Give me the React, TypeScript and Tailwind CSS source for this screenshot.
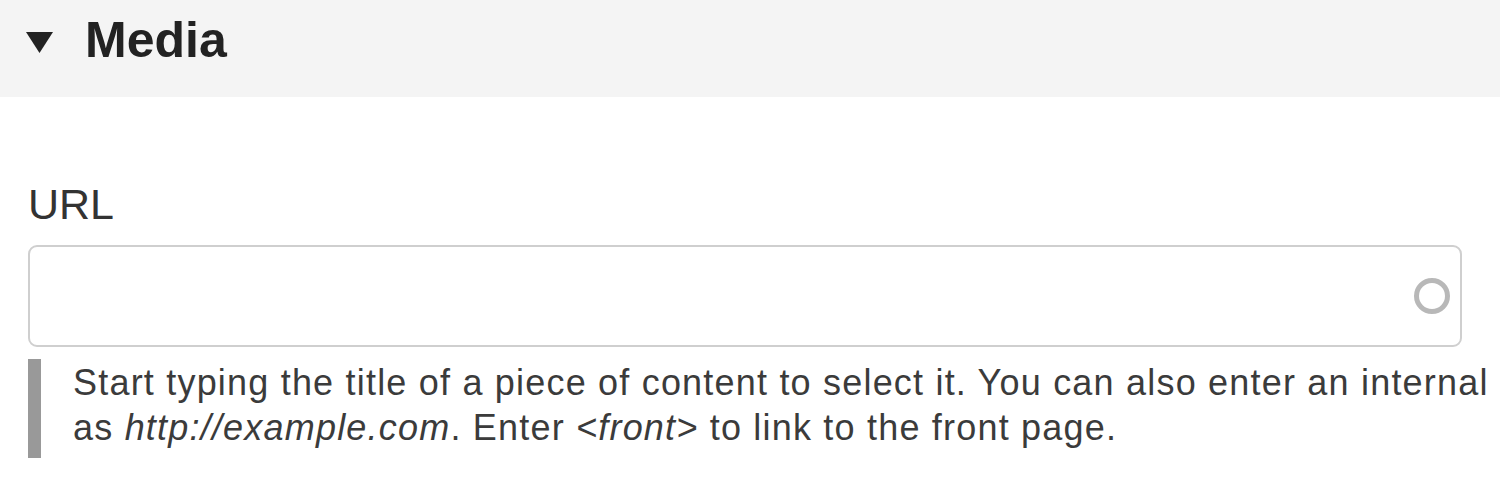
export default function App() {
  return (
    <div className="w-[1500px] h-[500px] overflow-hidden bg-white font-['Liberation_Sans',Arial,sans-serif]">
      {/* collapsible header */}
      <div className="h-[97px] bg-[#f4f4f4] flex items-start pt-[10px] pl-[26px]">
        <svg width="27" height="21" viewBox="0 0 27 21" className="mt-[22px] mr-[32px] shrink-0">
          <polygon points="0,0 27,0 13.5,21" fill="#222" />
        </svg>
        <h2 className="text-[50px] leading-[60px] font-bold text-[#222]">Media</h2>
      </div>

      <div className="pl-[28px] pr-[38px]">
        <label className="block mt-[83px] text-[43px] leading-[48px] text-[#333]">URL</label>

        <div className="mt-[17px] h-[102px] border-2 border-[#cfcfcf] rounded-[9px] flex items-center justify-end pr-[9px]">
          <svg width="38" height="38" viewBox="0 0 38 38">
            <circle cx="19" cy="19" r="15.5" fill="none" stroke="#b8b8b8" strokeWidth="5" />
          </svg>
        </div>

        <div className="mt-[12px] border-l-[13px] border-[#999] pl-[32px] pt-[1px] pb-[8px] text-[36px] leading-[45px] tracking-[1.2px] text-[#3b3b3b] whitespace-nowrap">
          <div>
            Start typing the title of a piece of content to select it. You can also enter an internal path such as /node/add or an external URL such
          </div>
          <div>
            as <em>http://example.com</em>. Enter <em>&lt;front&gt;</em> to link to the front page.
          </div>
        </div>
      </div>
    </div>
  );
}
